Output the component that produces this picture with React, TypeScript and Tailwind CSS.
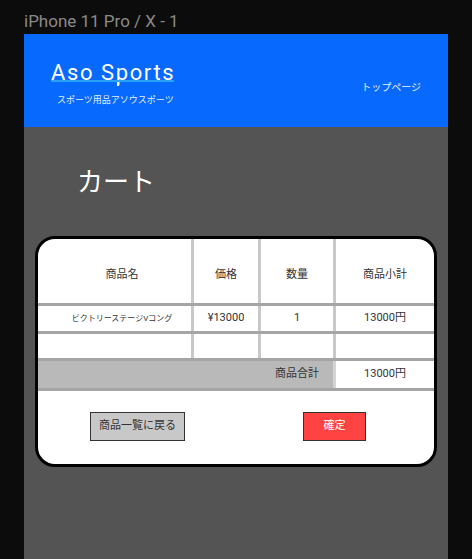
import React from 'react'

const font = { fontFamily: 'Roboto, "Noto Sans CJK JP", sans-serif' }

const cols = [
  'w-[156px] pl-[15px] border-r-[3px] border-[#c8c8c8]',
  'w-[67px] border-r-[3px] border-[#c8c8c8]',
  'w-[75px] border-r-[3px] border-[#c8c8c8]',
  'w-[98px]',
]

function Row({ cells, height, pad = '' }: { cells: React.ReactNode[]; height: string; pad?: string }) {
  return (
    <>
      <div className={`flex ${height}`}>
        {cells.map((c, i) => (
          <div
            key={i}
            className={`${cols[i]} ${pad} shrink-0 box-border flex items-center justify-center text-[#333]`}
          >
            {c}
          </div>
        ))}
      </div>
      <div className="h-[3px] bg-[#a5a5a5]" />
    </>
  )
}

export default function App() {
  return (
    <div className="min-h-[559px] bg-[#0c0c0c] overflow-hidden" style={font}>
      <div className="h-[34px] pl-[24px] pt-[11px] text-[17px] leading-[20px] text-[#8a8a8a]">
        iPhone 11 Pro / X - 1
      </div>
      <div className="ml-[24px] w-[424px] h-[525px] bg-[#545454]">
        <header className="h-[93px] bg-[#0769fe] flex items-start justify-between pl-[27px] pr-[27px]">
          <div className="pt-[26px]">
            <div className="relative text-[22px] leading-[26px] tracking-[1.6px] text-white">
              Aso Sports
              <div className="absolute left-0 w-[123px] top-[20px] h-[2px] bg-[#2aa3f5]" />
              <div className="absolute left-[66px] top-[22px] w-[2px] h-[4px] bg-white" />
            </div>
            <div className="mt-[8px] ml-[6px] text-[9px] leading-[12px] text-[#e6eeff]">
              スポーツ用品アソウスポーツ
            </div>
          </div>
          <div className="pt-[48px] text-[10px] leading-[12px] text-[#e6eeff]">トップページ</div>
        </header>
        <div className="pl-[53px] pt-[38px] h-[109px] text-[26px] leading-[34px] text-white">カート</div>
        <div className="mx-[11px] w-[402px] h-[231px] border-[3px] border-black rounded-[20px] bg-white overflow-hidden">
          <div className="text-[11px]">
            <Row height="h-[64px]" pad="pt-[8px]" cells={['商品名', '価格', '数量', '商品小計']} />
            <Row
              height="h-[25px]"
              cells={[
                <span className="text-[8px]">ビクトリーステージVコング</span>,
                '¥13000',
                '1',
                '13000円',
              ]}
            />
            <Row height="h-[24px]" cells={['', '', '', '']} />
            <div className="flex h-[27px]">
              <div className="w-[298px] shrink-0 box-border bg-[#b9b9b9] flex items-center justify-end pr-[14px] text-[#333] border-r-[3px] border-[#d4d4d4]">
                商品合計
              </div>
              <div className="w-[98px] shrink-0 flex items-center justify-center text-[#333]">13000円</div>
            </div>
            <div className="h-[3px] bg-[#a5a5a5]" />
          </div>
          <div className="flex pl-[52px] pt-[21px] gap-[118px] text-[11px]">
            <button className="w-[95px] h-[29px] bg-[#c8c8c8] border border-[#333] text-[#333]">
              商品一覧に戻る
            </button>
            <button className="w-[63px] h-[29px] bg-[#ff4242] border border-[#333] text-white">確定</button>
          </div>
        </div>
      </div>
    </div>
  )
}
